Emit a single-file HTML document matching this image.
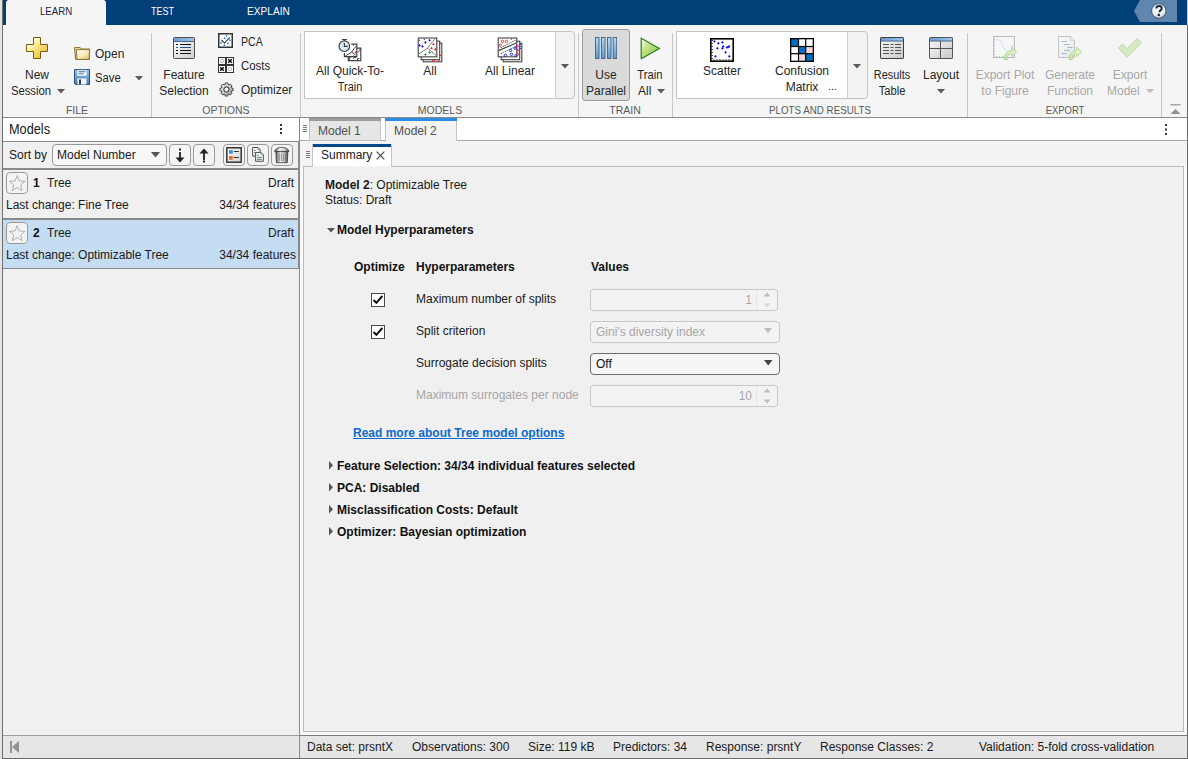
<!DOCTYPE html>
<html><head><meta charset="utf-8">
<style>
*{box-sizing:border-box;margin:0;padding:0}
html,body{width:1188px;height:759px;overflow:hidden}
body{position:relative;background:#f0f0f0;font-family:"Liberation Sans",sans-serif;font-size:12px;color:#1a1a1a}
.a{position:absolute}
.t{position:absolute;white-space:pre;line-height:1}
.rt{position:absolute;white-space:pre;line-height:1;color:#262626;text-align:center}
.lbl{position:absolute;white-space:pre;line-height:1;color:#5a5a5a;font-size:10.5px;text-align:center}
.sep{position:absolute;top:33px;width:1px;height:84px;background:#c8c8c8}
.dis{color:#a8a8a8}
.b{font-weight:bold}
</style></head><body>
<!-- left strip (other window) -->
<div class="a" style="left:0;top:0;width:2px;height:759px;background:#e4e4e4"></div>
<div class="a" style="left:2px;top:0;width:1px;height:759px;background:#6e6e6e"></div>

<!-- blue toolstrip tab bar -->
<div class="a" style="left:3px;top:0;width:1185px;height:25px;background:#003f77"></div>
<div class="a" style="left:6px;top:0;width:100px;height:25px;background:#f5f5f5;border-radius:3px 3px 0 0"></div>
<div class="t" style="left:40px;top:6px;font-size:11.5px;color:#1f1f3f;transform-origin:0 0;transform:scaleX(0.84)">LEARN</div>
<div class="t" style="left:151px;top:6px;font-size:11.5px;color:#fff;transform-origin:0 0;transform:scaleX(0.78)">TEST</div>
<div class="t" style="left:247px;top:6px;font-size:11.5px;color:#fff;transform-origin:0 0;transform:scaleX(0.88)">EXPLAIN</div>
<!-- help -->
<div class="a" style="left:1134px;top:0;width:43px;height:22px;background:#5f86ad;clip-path:polygon(0 50%,6px 0,100% 0,100% 100%,6px 100%)"></div>
<svg class="a" style="left:1150px;top:2px" width="18" height="18" viewBox="0 0 18 18">
<defs><radialGradient id="ghelp" cx="0.45" cy="0.35" r="0.7"><stop offset="0" stop-color="#ffffff"/><stop offset="0.6" stop-color="#eef0f2"/><stop offset="1" stop-color="#b4bcc4"/></radialGradient></defs>
<circle cx="8.8" cy="9" r="7.2" fill="url(#ghelp)" stroke="#2a3a55" stroke-width="0.7"/>
<path d="M6.3 6.6c0-1.7 1.2-2.6 2.7-2.6s2.7 0.9 2.7 2.4c0 1.9-2.2 2-2.2 3.8" fill="none" stroke="#1d2840" stroke-width="2"/>
<rect x="7.7" y="11.8" width="2.2" height="2.2" fill="#1d2840"/>
</svg>

<!-- ribbon -->
<div class="a" style="left:3px;top:25px;width:1184px;height:92px;background:#f5f5f5"></div>
<div class="a" style="left:3px;top:117px;width:1184px;height:1px;background:#8a8a8a"></div>

<div id="ribbon">
<!-- separators -->
<div class="sep" style="left:151px"></div>
<div class="sep" style="left:300px"></div>
<div class="sep" style="left:578px"></div>
<div class="sep" style="left:672px"></div>
<div class="sep" style="left:967px"></div>
<div class="sep" style="left:1161px"></div>
<!-- section labels -->
<div class="lbl" style="left:17px;width:120px;top:105px">FILE</div>
<div class="lbl" style="left:166px;width:120px;top:105px">OPTIONS</div>
<div class="lbl" style="left:380px;width:120px;top:105px">MODELS</div>
<div class="lbl" style="left:565px;width:120px;top:105px">TRAIN</div>
<div class="lbl" style="left:720px;width:200px;top:105px;transform:scaleX(0.93)">PLOTS AND RESULTS</div>
<div class="lbl" style="left:1005px;width:120px;top:105px;transform:scaleX(0.9)">EXPORT</div>

<!-- FILE -->
<svg class="a" style="left:26px;top:37px" width="22" height="22" viewBox="0 0 22 22">
<defs><linearGradient id="gplus" x1="0" y1="0" x2="1" y2="1"><stop offset="0" stop-color="#fffce8"/><stop offset="0.4" stop-color="#fdeb8e"/><stop offset="1" stop-color="#e3b226"/></linearGradient></defs>
<path d="M7.5 0.5h7v7h7v7h-7v7h-7v-7h-7v-7h7z" fill="url(#gplus)" stroke="#7e5c0e" stroke-width="1"/>
<path d="M8.5 1.5h5v3h-5zM1.5 8.5h6v3h-6z" fill="#fffdf0" opacity="0.6"/>
</svg>
<div class="rt" style="left:7px;width:60px;top:69px">New</div>
<div class="rt" style="left:1px;width:60px;top:85px;transform:scaleX(0.94)">Session</div>
<svg class="a" style="left:57px;top:89px" width="8" height="5"><path d="M0 0h8l-4 4.5z" fill="#5a5a5a"/></svg>

<svg class="a" style="left:74px;top:47px" width="16" height="13" viewBox="0 0 16 13">
<defs><linearGradient id="gfold" x1="0" y1="0" x2="1" y2="1"><stop offset="0" stop-color="#ffffff"/><stop offset="0.55" stop-color="#f8ecb8"/><stop offset="1" stop-color="#dcc060"/></linearGradient></defs>
<path d="M0.6 0.6h5.6l1.2 1.4h8v10.4h-13.8z" fill="#efe2b0" stroke="#8a6a25" stroke-width="1"/>
<path d="M2.4 2.6h13v9.8h-12.4z" fill="url(#gfold)" stroke="#8a6a25" stroke-width="0.9"/>
</svg>
<div class="t" style="left:95px;top:48px;color:#262626">Open</div>
<svg class="a" style="left:74px;top:69px" width="16" height="16" viewBox="0 0 16 16">
<defs><linearGradient id="gsave" x1="0" y1="0" x2="0" y2="1"><stop offset="0" stop-color="#9ccbf0"/><stop offset="1" stop-color="#3f78b8"/></linearGradient></defs>
<path d="M0.5 0.5h15v15h-14l-1-1z" fill="url(#gsave)" stroke="#254f80" stroke-width="1"/>
<rect x="3" y="1" width="10" height="6" fill="#fff" stroke="#7a9ab8" stroke-width="0.6"/>
<path d="M4.5 2.8h7M4.5 4.8h5" stroke="#3a6aa0" stroke-width="1"/>
<rect x="3.5" y="9.5" width="9" height="6" fill="#f4f4f4"/>
<rect x="5" y="10.5" width="2" height="5" fill="#1d3f66"/>
</svg>
<div class="t" style="left:95px;top:72px;color:#262626;transform-origin:0 0;transform:scaleX(0.94)">Save</div>
<svg class="a" style="left:135px;top:76px" width="8" height="5"><path d="M0 0h8l-4 4.5z" fill="#5a5a5a"/></svg>

<!-- OPTIONS -->
<svg class="a" style="left:173px;top:37px" width="22" height="22" viewBox="0 0 22 22">
<defs><linearGradient id="gwin" x1="0" y1="0" x2="1" y2="1"><stop offset="0" stop-color="#ffffff"/><stop offset="1" stop-color="#cfcfcf"/></linearGradient>
<linearGradient id="gtitle" x1="0" y1="0" x2="1" y2="0"><stop offset="0" stop-color="#6f9fd0"/><stop offset="1" stop-color="#9cc3ea"/></linearGradient></defs>
<rect x="0.5" y="0.5" width="21" height="21" rx="1" fill="url(#gwin)" stroke="#505050"/>
<rect x="1" y="1" width="20" height="3" fill="url(#gtitle)"/>
<path d="M1 4.5h20" stroke="#4a6a90" stroke-width="1"/>
<path d="M3 7.5h2M7 7.5h11M3 10.5h2M3 13.5h2M7 13.5h11M3 16.5h2M7 16.5h11" stroke="#111" stroke-width="1"/>
<path d="M3 10.5h2M7 10.5h11" stroke="#1f5aa0" stroke-width="1"/>
</svg>
<div class="rt" style="left:144px;width:80px;top:69px">Feature</div>
<div class="rt" style="left:144px;width:80px;top:85px">Selection</div>

<svg class="a" style="left:218px;top:33px" width="15" height="15" viewBox="0 0 15 15">
<rect x="0.75" y="0.75" width="13.5" height="13.5" fill="#fff" stroke="#333" stroke-width="1.5"/>
<path d="M3.3 6.8l3.2 3.2 5.2-5.6" fill="none" stroke="#333" stroke-width="1.1"/>
<g fill="#1a78d8"><path d="M8.6 1.9l1.1 1.1-1.1 1.1-1.1-1.1z"/><path d="M6.6 4.1l1.1 1.1-1.1 1.1-1.1-1.1z"/><path d="M11.8 6.1l1.1 1.1-1.1 1.1-1.1-1.1z"/><path d="M3 8.7l1.1 1.1-1.1 1.1-1.1-1.1z"/><path d="M9.9 9.2l1.1 1.1-1.1 1.1-1.1-1.1z"/><path d="M6.3 11.1l1.1 1.1-1.1 1.1-1.1-1.1z"/></g>
</svg>
<div class="t" style="left:241px;top:36px;color:#262626;transform-origin:0 0;transform:scaleX(0.88)">PCA</div>
<svg class="a" style="left:218px;top:57px" width="16" height="16" viewBox="0 0 16 16">
<rect x="0" y="0" width="16" height="16" fill="#333"/>
<rect x="1" y="1" width="6" height="6" fill="#fff"/><rect x="9" y="1" width="6" height="6" fill="#fff"/>
<rect x="1" y="9" width="6" height="6" fill="#fff"/><rect x="9" y="9" width="6" height="6" fill="#fff"/>
<circle cx="4" cy="4" r="1.7" fill="none" stroke="#a0a0a0" stroke-width="0.7"/>
<circle cx="12" cy="12" r="1.7" fill="none" stroke="#a0a0a0" stroke-width="0.7"/>
<path d="M10.2 2.2l3.6 3.6M13.8 2.2l-3.6 3.6M2.2 10.2l3.6 3.6M5.8 10.2l-3.6 3.6" stroke="#000" stroke-width="1.4"/>
</svg>
<div class="t" style="left:241px;top:60px;color:#262626;transform-origin:0 0;transform:scaleX(0.95)">Costs</div>
<svg class="a" style="left:218.5px;top:81.5px" width="15" height="15" viewBox="0 0 15 15">
<defs><linearGradient id="ggear" x1="0" y1="0" x2="1" y2="1"><stop offset="0" stop-color="#ececec"/><stop offset="1" stop-color="#a0a0a0"/></linearGradient></defs>
<path d="M6.00 2.52L6.20 0.93L8.80 0.93L9.00 2.52L9.96 2.92L11.23 1.93L13.07 3.77L12.08 5.04L12.48 6.00L14.07 6.20L14.07 8.80L12.48 9.00L12.08 9.96L13.07 11.23L11.23 13.07L9.96 12.08L9.00 12.48L8.80 14.07L6.20 14.07L6.00 12.48L5.04 12.08L3.77 13.07L1.93 11.23L2.92 9.96L2.52 9.00L0.93 8.80L0.93 6.20L2.52 6.00L2.92 5.04L1.93 3.77L3.77 1.93L5.04 2.92z" fill="url(#ggear)" stroke="#2a2a2a" stroke-width="0.8" stroke-linejoin="round"/>
<circle cx="7.5" cy="7.5" r="2.6" fill="#fafafa" stroke="#1e1e1e" stroke-width="0.95"/>
</svg>
<div class="t" style="left:241px;top:84px;color:#262626">Optimizer</div>
<!-- MODELS gallery -->
<div class="a" style="left:304px;top:31px;width:271px;height:68px;border:1px solid #c4c4c4;border-radius:0 4px 4px 0;background:#f3f3f3"></div>
<div class="a" style="left:305px;top:32px;width:251px;height:66px;background:#fff;border-right:1px solid #d0d0d0"></div>
<svg class="a" style="left:561px;top:64px" width="8" height="5"><path d="M0 0h8l-4 4.5z" fill="#5a5a5a"/></svg>

<svg class="a" style="left:334px;top:34px" width="32" height="32" viewBox="0 0 32 32">
<g fill="none" stroke="#3c3c3c" stroke-width="1.15">
<path d="M14.3 22.6v4h12.5v-12.5h-4"/>
<path d="M17.3 10.1h5.5v12.5h-12.4v-3.5"/>
<path d="M11.4 21.9l6.3-3.8 4.2-5.9M17.7 18.1l3.8 3" stroke-width="0.95"/>
<path d="M15.5 26v-2.5l2.5-1M19 24.5l2-1.5 1.5 1.5M23.5 26.5v-2h2" stroke-width="0.9"/>
<path d="M26.5 14.5l-2.5 4" stroke-width="0.8"/>
<circle cx="10.3" cy="12.2" r="5.3" fill="#dbe9f4"/>
<path d="M10.4 9v3.4h3.3"/>
<path d="M8 5.5h5M10.5 5.5v1.4"/>
</g>
<path d="M21.5 17.3l1.1 1.1-1.1 1.1-1.1-1.1z" fill="#e81010"/>
<circle cx="19.4" cy="11.4" r="0.6" fill="#6060ff"/>
<circle cx="19.4" cy="21.5" r="0.6" fill="#60b060"/>
</svg>
<div class="rt" style="left:300px;width:100px;top:65px">All Quick-To-</div>
<div class="rt" style="left:300px;width:100px;top:81px;transform:scaleX(0.91)">Train</div>

<svg class="a" style="left:417px;top:37px" width="26" height="26" viewBox="0 0 26 26">
<g fill="#fff" stroke="#444" stroke-width="1.1">
<rect x="6.3" y="6.1" width="18.5" height="18.7"/>
<rect x="4.2" y="4.2" width="18.5" height="18.5"/>
<rect x="1.2" y="1" width="18.6" height="18.8"/>
</g>
<path d="M2 16.8l8.5-5.5 7.6-9.7M10.5 11.3l8.4 6.8" fill="none" stroke="#505050" stroke-width="0.95" stroke-dasharray="1.5 0.4"/>
<g fill="#0a18ee"><path d="M2.5 2.5l0.8 0.8-0.8 0.8-0.8-0.8z"/><path d="M7.3 1.4999999999999998l0.8 0.8-0.8 0.8-0.8-0.8z"/><path d="M12.6 1.9999999999999998l1.3 1.3-1.3 1.3-1.3-1.3z"/><path d="M8.4 4.1000000000000005l1.3 1.3-1.3 1.3-1.3-1.3z"/><path d="M2.5 7.1000000000000005l1.3 1.3-1.3 1.3-1.3-1.3z"/><path d="M5.4 8.1l1.3 1.3-1.3 1.3-1.3-1.3z"/></g>
<g fill="#ee1414"><path d="M16.4 6.0l1.3 1.3-1.3 1.3-1.3-1.3z"/><path d="M14.5 10.0l1.3 1.3-1.3 1.3-1.3-1.3z"/><path d="M18.3 11.1l1.3 1.3-1.3 1.3-1.3-1.3z"/><path d="M23.4 17.400000000000002l0.9 0.9-0.9 0.9-0.9-0.9z"/><path d="M15.4 22.8l0.8 0.8-0.8 0.8-0.8-0.8z"/><path d="M17.5 22.8l0.8 0.8-0.8 0.8-0.8-0.8z"/><path d="M21.5 22.8l0.8 0.8-0.8 0.8-0.8-0.8z"/></g>
<g fill="#14801a"><path d="M12.6 14.1l1.3 1.3-1.3 1.3-1.3-1.3z"/><path d="M8.4 16.2l1.3 1.3-1.3 1.3-1.3-1.3z"/></g>
</svg>
<div class="rt" style="left:380px;width:100px;top:65px">All</div>

<svg class="a" style="left:497px;top:37px" width="26" height="26" viewBox="0 0 26 26">
<g fill="#fff" stroke="#444" stroke-width="1.1">
<rect x="6.3" y="6.1" width="18.5" height="18.7"/>
<rect x="4.2" y="4.2" width="18.5" height="18.5"/>
<rect x="1.2" y="1" width="18.6" height="18.8"/>
</g>
<path d="M1.5 13.6l18.3-7.8" stroke="#444" stroke-width="1.15"/>
<path d="M4.2 10.5l14-7.2M4.2 16.4l14-6.7" stroke="#444" stroke-width="1.1" stroke-linecap="round" stroke-dasharray="0.1 2.1"/>
<g fill="none" stroke="#ee2424" stroke-width="0.9"><circle cx="5.4" cy="4.4" r="1.2"/><circle cx="9.4" cy="4.4" r="1.2"/><circle cx="3.3" cy="8.4" r="1.2"/><circle cx="20.4" cy="9.2" r="1"/><circle cx="21.3" cy="13.2" r="1"/><circle cx="20.6" cy="17.3" r="1"/></g>
<circle cx="14.5" cy="2.3" r="0.7" fill="#ee2424"/>
<g fill="none" stroke="#1424ee" stroke-width="0.9"><circle cx="13.5" cy="13.5" r="1.2"/><circle cx="18.1" cy="11.1" r="1.2"/><circle cx="8.4" cy="18.3" r="1.2"/><circle cx="14.5" cy="17.3" r="1.2"/><circle cx="18.7" cy="18.6" r="1"/></g>
<path d="M23.4 7v6" stroke="#1424ee" stroke-width="1" stroke-dasharray="1 1"/>
</svg>
<div class="rt" style="left:460px;width:100px;top:65px">All Linear</div>

<!-- TRAIN -->
<div class="a" style="left:582px;top:29px;width:48px;height:72px;background:#dadada;border:1px solid #9c9c9c;border-radius:3px"></div>
<svg class="a" style="left:595px;top:37px" width="22" height="22" viewBox="0 0 22 22">
<defs><linearGradient id="gbar" x1="0" y1="0" x2="0" y2="1"><stop offset="0" stop-color="#b3dcf6"/><stop offset="1" stop-color="#5e9ad0"/></linearGradient></defs>
<g fill="url(#gbar)" stroke="#3f5f85" stroke-width="0.9"><rect x="0.5" y="0.5" width="3.5" height="21"/><rect x="6.5" y="0.5" width="3.5" height="21"/><rect x="12.5" y="0.5" width="3.5" height="21"/><rect x="18.2" y="0.5" width="3.5" height="21"/></g>
</svg>
<div class="rt" style="left:566px;width:80px;top:69px">Use</div>
<div class="rt" style="left:566px;width:80px;top:85px">Parallel</div>

<svg class="a" style="left:640px;top:37px" width="21" height="23" viewBox="0 0 21 23">
<defs><linearGradient id="gtri" x1="0" y1="0" x2="1" y2="1"><stop offset="0" stop-color="#ffffff"/><stop offset="0.35" stop-color="#c4e48a"/><stop offset="1" stop-color="#86c43c"/></linearGradient></defs>
<path d="M1.2 1.2l18.3 10.3-18.3 10.3z" fill="url(#gtri)" stroke="#2f7a22" stroke-width="1.2" stroke-linejoin="round"/>
</svg>
<div class="rt" style="left:610px;width:80px;top:69px;transform:scaleX(0.94)">Train</div>
<div class="t" style="left:638px;top:85px;color:#262626">All</div>
<svg class="a" style="left:657px;top:89px" width="8" height="5"><path d="M0 0h8l-4 4.5z" fill="#5a5a5a"/></svg>

<!-- PLOTS gallery -->
<div class="a" style="left:676px;top:31px;width:192px;height:68px;border:1px solid #c4c4c4;border-radius:0 4px 4px 0;background:#f3f3f3"></div>
<div class="a" style="left:677px;top:32px;width:171px;height:66px;background:#fff;border-right:1px solid #d0d0d0"></div>
<svg class="a" style="left:853px;top:64px" width="8" height="5"><path d="M0 0h8l-4 4.5z" fill="#5a5a5a"/></svg>

<svg class="a" style="left:710px;top:38px" width="24" height="24" viewBox="0 0 24 24">
<rect x="0.8" y="0.8" width="22.4" height="22.4" fill="#fff" stroke="#000" stroke-width="1.6"/>
<path d="M1.5 2.5h1.3M1.5 5.5h1.3M1.5 8.5h1.3M1.5 11.5h1.3M1.5 14.5h1.3M1.5 17.5h1.3M1.5 20.5h1.3M4 22.5v-1.3M7 22.5v-1.3M10 22.5v-1.3M13 22.5v-1.3M16 22.5v-1.3M19 22.5v-1.3M22 22.5v-1.3" stroke="#000" stroke-width="0.9"/>
<g fill="#0b14f0"><path d="M4.34 2.03l1.35 1.35-1.35 1.35-1.35-1.35z"/><path d="M8.35 4.02l1.35 1.35-1.35 1.35-1.35-1.35z"/><path d="M12.35 3.09l1.35 1.35-1.35 1.35-1.35-1.35z"/><path d="M7.42 9.00l1.35 1.35-1.35 1.35-1.35-1.35z"/><path d="M12.35 9.00l1.35 1.35-1.35 1.35-1.35-1.35z"/><path d="M13.20 7.10l1.35 1.35-1.35 1.35-1.35-1.35z"/><path d="M15.52 13.00l1.35 1.35-1.35 1.35-1.35-1.35z"/><path d="M5.39 17.01l1.35 1.35-1.35 1.35-1.35-1.35z"/><path d="M19.32 17.01l1.35 1.35-1.35 1.35-1.35-1.35z"/><path d="M19.11 7.10l1.35 1.35-1.35 1.35-1.35-1.35z"/><path d="M18.05 7.73l1.35 1.35-1.35 1.35-1.35-1.35z"/><path d="M17.00 8.15l1.35 1.35-1.35 1.35-1.35-1.35z"/></g>
</svg>
<div class="rt" style="left:672px;width:100px;top:65px">Scatter</div>

<svg class="a" style="left:790px;top:38px" width="24" height="24" viewBox="0 0 24 24">
<rect x="0" y="0" width="24" height="24" fill="#000"/>
<rect x="1.3" y="1.3" width="6.6" height="6.6" fill="#0070c4"/><rect x="9.1" y="1.3" width="6" height="6.6" fill="#fff"/><rect x="16.3" y="1.3" width="6.4" height="6.6" fill="#fff"/>
<rect x="1.3" y="9.1" width="6.6" height="6" fill="#fff"/><rect x="9.1" y="9.1" width="6" height="6" fill="#0070c4"/><rect x="16.3" y="9.1" width="6.4" height="6" fill="#f9d3db"/>
<rect x="1.3" y="16.3" width="6.6" height="6.4" fill="#fff"/><rect x="9.1" y="16.3" width="6" height="6.4" fill="#f9d3db"/><rect x="16.3" y="16.3" width="6.4" height="6.4" fill="#0070c4"/>
</svg>
<div class="rt" style="left:752px;width:100px;top:65px">Confusion</div>
<div class="rt" style="left:752px;width:100px;top:81px">Matrix</div>
<div class="t" style="left:828px;top:81px;color:#262626;font-size:11px">...</div>

<!-- Results table / Layout -->
<svg class="a" style="left:880px;top:37px" width="24" height="22" viewBox="0 0 24 22">
<defs><linearGradient id="gbody" x1="0" y1="0" x2="1" y2="1"><stop offset="0" stop-color="#fafafa"/><stop offset="1" stop-color="#c8c8c8"/></linearGradient>
<linearGradient id="gtb" x1="0" y1="0" x2="1" y2="0"><stop offset="0" stop-color="#6b9bd0"/><stop offset="1" stop-color="#9ccbf0"/></linearGradient></defs>
<rect x="0.5" y="0.5" width="23" height="21" rx="0.6" fill="url(#gbody)" stroke="#3d3d3d"/>
<rect x="1" y="1" width="22" height="2.8" fill="url(#gtb)"/><path d="M0.5 4h23" stroke="#41618a"/>
<path d="M3 7.5h6M10.5 7.5h3M15 7.5h6M3 10.5h6M10.5 10.5h3M15 10.5h6M3 13.5h6M10.5 13.5h3M15 13.5h6M3 16.5h6M10.5 16.5h3M15 16.5h6" stroke="#555" stroke-width="1"/>
</svg>
<div class="rt" style="left:852px;width:80px;top:69px;transform:scaleX(0.91)">Results</div>
<div class="rt" style="left:852px;width:80px;top:85px;transform:scaleX(0.93)">Table</div>
<svg class="a" style="left:929px;top:37px" width="24" height="22" viewBox="0 0 24 22">
<rect x="0.5" y="0.5" width="23" height="21" rx="0.6" fill="url(#gbody)" stroke="#555"/>
<rect x="1" y="1" width="22" height="2.8" fill="url(#gtb)"/><path d="M0.5 4h23" stroke="#41618a"/>
<path d="M11.5 4v17.5M0.5 11.5h23" stroke="#555" stroke-width="1"/>
</svg>
<div class="rt" style="left:901px;width:80px;top:69px">Layout</div>
<svg class="a" style="left:937px;top:89px" width="8" height="5"><path d="M0 0h8l-4 4.5z" fill="#5a5a5a"/></svg>

<!-- EXPORT (disabled) -->
<svg class="a" style="left:990px;top:34px" width="30" height="28" viewBox="0 0 30 28">
<defs><linearGradient id="garr" x1="0" y1="1" x2="1" y2="0"><stop offset="0" stop-color="#b8dca0"/><stop offset="0.6" stop-color="#e4f2d0"/><stop offset="1" stop-color="#cfe8b4"/></linearGradient></defs>
<rect x="3.6" y="2.5" width="20.8" height="21" fill="#f6f6f6" stroke="#b9b9b9" stroke-width="1"/>
<path d="M4 5.5h1M4 8.5h1M4 11.5h1M4 14.5h1M4 17.5h1M4 20.3h1M6.3 23v-1M9.4 23v-1M12.5 23v-1" stroke="#b9b9b9" stroke-width="0.9"/>
<path d="M4.3 9.5C5.5 5.5 7 5 8.3 5.3 11 6 13 13 15.5 16.6 18 19 22 18 23.8 9" fill="none" stroke="#c6daee" stroke-width="0.9"/>
<path d="M14.2 25.6C14.2 20.5 16.3 17.4 21.6 16.6V13.2L26.6 17.8 21.6 22.6V19.6C18.6 19.9 17.2 22 17.2 25.6z" fill="url(#garr)" stroke="#a6d28e" stroke-width="0.8" stroke-linejoin="round"/>
</svg>
<div class="rt dis" style="left:955px;width:100px;top:69px">Export Plot</div>
<div class="rt dis" style="left:955px;width:100px;top:85px">to Figure</div>
<svg class="a" style="left:1055px;top:34px" width="30" height="28" viewBox="0 0 30 28">
<defs><linearGradient id="gdoc" x1="0" y1="0" x2="1" y2="1"><stop offset="0" stop-color="#fafafa"/><stop offset="1" stop-color="#e2e8ef"/></linearGradient></defs>
<path d="M3.6 2.5h12l3.9 3.9v17.1h-15.9z" fill="url(#gdoc)" stroke="#c2c2c2" stroke-width="1"/>
<path d="M15.6 2.5v4h3.9" fill="#f4f4f4" stroke="#c8c8c8" stroke-width="0.8"/>
<path d="M6.1 7.5h5.7M9 10.5h5.8M12.2 13.5h5.5M9 16.4h5.8M6.1 19.4h5.7" stroke="#b4b4b4" stroke-width="1"/>
<path d="M14.2 25.6C14.2 20.5 16.3 17.4 21.6 16.6V13.2L26.6 17.8 21.6 22.6V19.6C18.6 19.9 17.2 22 17.2 25.6z" fill="url(#garr)" stroke="#a6d28e" stroke-width="0.8" stroke-linejoin="round"/>
</svg>
<div class="rt dis" style="left:1030px;width:80px;top:69px">Generate</div>
<div class="rt dis" style="left:1030px;width:80px;top:85px">Function</div>
<svg class="a" style="left:1118px;top:38px" width="24" height="20" viewBox="0 0 24 20">
<path d="M0.5 10l4-4 4.5 4.5 10.5-10 4 4-14.5 15z" fill="#d4e9c4" stroke="#b6d6a2" stroke-width="0.8"/>
</svg>
<div class="rt dis" style="left:1090px;width:80px;top:69px">Export</div>
<div class="t dis" style="left:1107px;top:85px">Model</div>
<svg class="a" style="left:1146px;top:89px" width="8" height="5"><path d="M0 0h8l-4 4.5z" fill="#c0c0c0"/></svg>

<!-- collapse ribbon -->
<svg class="a" style="left:1170px;top:104px" width="11" height="11" viewBox="0 0 11 11">
<path d="M0.5 0.8h10" stroke="#909090" stroke-width="1.2"/><path d="M0.5 10l5-5 5 5z" fill="#909090"/>
</svg>
</div>

<!-- left panel -->
<div class="a" style="left:3px;top:118px;width:296px;height:23px;background:#fff"></div>
<div class="t" style="left:9px;top:122px;font-size:14px;color:#1a1a1a;transform-origin:0 0;transform:scaleX(0.91)">Models</div>
<div class="a" style="left:280px;top:124px;width:2px;height:2px;background:#333;box-shadow:0 4px 0 #333,0 8px 0 #333"></div>
<div class="a" style="left:3px;top:141px;width:296px;height:1px;background:#8a8a8a"></div>
<div class="a" style="left:3px;top:142px;width:296px;height:26px;background:#f0f0f0"></div>
<div class="a" style="left:3px;top:168px;width:296px;height:2px;background:#8a8a8a"></div>
<div class="a" style="left:3px;top:218px;width:296px;height:2px;background:#8a8a8a"></div>
<div class="a" style="left:3px;top:220px;width:296px;height:48px;background:#c5ddf3"></div>
<div class="a" style="left:3px;top:268px;width:296px;height:1px;background:#8a8a8a"></div>
<div class="a" style="left:3px;top:735px;width:296px;height:1px;background:#a0a0a0"></div>
<div class="a" style="left:3px;top:736px;width:296px;height:22px;background:#e6e6e6"></div>
<div class="a" style="left:299px;top:118px;width:1px;height:641px;background:#8a8a8a"></div>
<div class="a" style="left:298px;top:141px;width:1px;height:128px;background:#8a8a8a"></div>

<div id="leftpanel">
<div class="t" style="left:9px;top:149px;color:#1a1a1a">Sort by</div>
<div class="a" style="left:52px;top:144px;width:115px;height:22px;border:1px solid #9a9a9a;border-radius:4px;background:#f7f7f7"></div>
<div class="t" style="left:57px;top:149px;color:#1a1a1a">Model Number</div>
<svg class="a" style="left:151px;top:152px" width="9" height="6"><path d="M0 0h9l-4.5 5.5z" fill="#555"/></svg>
<div class="a" style="left:169px;top:144px;width:22px;height:22px;border:1px solid #9a9a9a;border-radius:4px;background:#f3f3f3"></div>
<svg class="a" style="left:175px;top:147px" width="10" height="17" viewBox="0 0 10 17">
<rect x="4" y="1.5" width="2" height="2" fill="#222"/><rect x="4.1" y="5" width="1.8" height="7" fill="#222"/><path d="M0.5 10.5h9l-4.5 5z" fill="#222"/>
</svg>
<div class="a" style="left:193px;top:144px;width:22px;height:22px;border:1px solid #9a9a9a;border-radius:4px;background:#f3f3f3"></div>
<svg class="a" style="left:199px;top:147px" width="10" height="17" viewBox="0 0 10 17">
<path d="M0.5 6.5h9l-4.5-5z" fill="#222"/><rect x="4.1" y="6" width="1.8" height="7" fill="#222"/><rect x="4" y="13.5" width="2" height="2" fill="#222"/>
</svg>
<div class="a" style="left:223px;top:144px;width:22px;height:22px;border:1px solid #9a9a9a;border-radius:4px;background:#f3f3f3"></div>
<svg class="a" style="left:226px;top:147px" width="16" height="16" viewBox="0 0 16 16">
<defs><linearGradient id="glist" x1="0" y1="0" x2="1" y2="1"><stop offset="0" stop-color="#fff"/><stop offset="1" stop-color="#d0d0d0"/></linearGradient></defs>
<rect x="0.8" y="0.8" width="14.4" height="14.4" fill="url(#glist)" stroke="#333" stroke-width="1.5"/>
<rect x="3" y="3" width="3.8" height="3.8" fill="#3a96e0"/><rect x="3" y="9" width="3.8" height="3.8" fill="#e8732a"/>
<path d="M7.8 4.5h5M7.8 10.5h5" stroke="#333" stroke-width="1"/>
</svg>
<div class="a" style="left:247px;top:144px;width:22px;height:22px;border:1px solid #9a9a9a;border-radius:4px;background:#f3f3f3"></div>
<svg class="a" style="left:246px;top:143px" width="24" height="24" viewBox="0 0 24 24">
<defs><linearGradient id="gcp" x1="0" y1="0" x2="0" y2="1"><stop offset="0" stop-color="#ffffff"/><stop offset="1" stop-color="#dcecf2"/></linearGradient></defs>
<path d="M6.6 4.5h5.4l2.2 2.2v6.5h-7.6z" fill="url(#gcp)" stroke="#4a4a4a" stroke-width="0.95"/>
<path d="M12 4.5v2.2h2.2" fill="none" stroke="#6a6a6a" stroke-width="0.6"/>
<path d="M8 7.4h1.8M8 9.5h3" stroke="#555" stroke-width="0.7"/>
<path d="M9.6 9.6h5.6l2.2 2.2v6.5h-7.8z" fill="url(#gcp)" stroke="#4a4a4a" stroke-width="0.95"/>
<path d="M15.2 9.6v2.2h2.2" fill="none" stroke="#6a6a6a" stroke-width="0.6"/>
<path d="M11 12.3h1.8M11 14.4h4.8M11 16.4h4.8" stroke="#555" stroke-width="0.8"/>
</svg>
<div class="a" style="left:271px;top:144px;width:22px;height:22px;border:1px solid #9a9a9a;border-radius:4px;background:#f3f3f3"></div>
<svg class="a" style="left:270px;top:143px" width="24" height="24" viewBox="0 0 24 24">
<defs><linearGradient id="gtr" x1="0" y1="0" x2="1" y2="0"><stop offset="0" stop-color="#505050"/><stop offset="0.35" stop-color="#f2f2f2"/><stop offset="0.7" stop-color="#c8c8c8"/><stop offset="1" stop-color="#4a4a4a"/></linearGradient></defs>
<path d="M4.6 8.6c0.2-2.6 3.5-4.2 7.2-4.2s7 1.6 7.2 4.2z" fill="url(#gtr)" stroke="#3a3a3a" stroke-width="0.8"/>
<path d="M5.9 8.7h11.9l-0.5 11h-10.9z" fill="url(#gtr)" stroke="#3a3a3a" stroke-width="0.8"/>
<path d="M9.3 10.5v7.5M11.4 10.5v7.5M13.6 10.5v7.5M15.8 10.5v7.5" stroke="#6a6a6a" stroke-width="0.7"/>
</svg>

<!-- rows -->
<div class="a" style="left:6px;top:172px;width:22px;height:22px;border:1px solid #9a9a9a;border-radius:4px;background:#f3f3f3"></div>
<svg class="a" style="left:6px;top:172px" width="22" height="22" viewBox="0 0 22 22"><path d="M11.20 3.60L13.32 8.99L19.09 9.34L14.62 13.01L16.08 18.61L11.20 15.50L6.32 18.61L7.78 13.01L3.31 9.34L9.08 8.99z" fill="none" stroke="#a8a8a8" stroke-width="0.9" stroke-linejoin="round"/></svg>
<div class="t b" style="left:33px;top:177px;color:#111">1</div>
<div class="t" style="left:47px;top:177px;color:#1a1a1a">Tree</div>
<div class="t" style="left:238px;width:56px;text-align:right;top:177px;color:#1a1a1a">Draft</div>
<div class="t" style="left:6px;top:199px;color:#1a1a1a">Last change: Fine Tree</div>
<div class="t" style="left:196px;width:100px;text-align:right;top:199px;color:#1a1a1a">34/34 features</div>

<div class="a" style="left:6px;top:222px;width:22px;height:22px;border:1px solid #9a9a9a;border-radius:4px;background:#f3f3f3"></div>
<svg class="a" style="left:6px;top:222px" width="22" height="22" viewBox="0 0 22 22"><path d="M11.20 3.60L13.32 8.99L19.09 9.34L14.62 13.01L16.08 18.61L11.20 15.50L6.32 18.61L7.78 13.01L3.31 9.34L9.08 8.99z" fill="none" stroke="#a8a8a8" stroke-width="0.9" stroke-linejoin="round"/></svg>
<div class="t b" style="left:33px;top:227px;color:#111">2</div>
<div class="t" style="left:47px;top:227px;color:#1a1a1a">Tree</div>
<div class="t" style="left:238px;width:56px;text-align:right;top:227px;color:#1a1a1a">Draft</div>
<div class="t" style="left:6px;top:249px;color:#1a1a1a">Last change: Optimizable Tree</div>
<div class="t" style="left:196px;width:100px;text-align:right;top:249px;color:#1a1a1a">34/34 features</div>

<svg class="a" style="left:10px;top:741px" width="11" height="12" viewBox="0 0 11 12"><rect x="0" y="0" width="2" height="12" fill="#939393"/><path d="M9 0v12l-7-6z" fill="#939393"/></svg>
</div>

<!-- right panel -->
<div class="a" style="left:300px;top:118px;width:887px;height:22px;background:#fff"></div>
<div class="a" style="left:300px;top:140px;width:887px;height:1px;background:#a8a8a8"></div>
<div class="a" style="left:300px;top:141px;width:887px;height:594px;background:#f3f3f3"></div>

<div id="rightpanel">
<!-- grip -->
<svg class="a" style="left:303px;top:125px" width="5" height="7"><path d="M0 0.5h4M0 2.5h4M0 4.5h4M0 6.5h4" stroke="#777" stroke-width="1"/></svg>
<!-- Model 1 tab -->
<div class="a" style="left:309px;top:118px;width:72px;height:23px;background:#e6e6e6;border:1px solid #c4c4c4;border-top:none"></div>
<div class="a" style="left:309px;top:118px;width:72px;height:3px;background:#9c9c9c"></div>
<div class="t" style="left:318px;top:125px;color:#505050">Model 1</div>
<!-- Model 2 tab -->
<div class="a" style="left:385px;top:118px;width:72px;height:23px;background:#f3f3f3;border-left:1px solid #c4c4c4;border-right:1px solid #c4c4c4"></div>
<div class="a" style="left:385px;top:118px;width:72px;height:3px;background:#2a8de4"></div>
<div class="t" style="left:394px;top:125px;color:#505050">Model 2</div>
<svg class="a" style="left:1165px;top:124px" width="3" height="11"><rect x="0" y="0" width="2" height="2" fill="#333"/><rect x="0" y="4.5" width="2" height="2" fill="#333"/><rect x="0" y="9" width="2" height="2" fill="#333"/></svg>

<!-- Summary tab -->
<svg class="a" style="left:306px;top:151px" width="5" height="8"><path d="M0 0.5h4M0 2.5h4M0 4.5h4M0 6.5h4" stroke="#777" stroke-width="1"/></svg>
<div class="a" style="left:312px;top:144px;width:80px;height:23px;background:#fff;border-left:1px solid #c4c4c4;border-right:1px solid #c4c4c4"></div>
<div class="a" style="left:313px;top:144px;width:78px;height:3px;background:#004a8c"></div>
<div class="t" style="left:321px;top:149px;color:#1a1a1a">Summary</div>
<svg class="a" style="left:376px;top:151px" width="9" height="9"><path d="M0.7 0.7l7.6 7.6M8.3 0.7l-7.6 7.6" stroke="#444" stroke-width="1.1"/></svg>

<!-- summary panel -->
<div class="a" style="left:300px;top:166px;width:887px;height:569px;background:#f9f9f9"></div>
<div class="a" style="left:303px;top:166px;width:881px;height:566px;background:#f0f0f0;border:1px solid #bcbcbc"></div>
<div class="a" style="left:313px;top:166px;width:78px;height:1px;background:#f6f6f6"></div>

<div class="t" style="left:325px;top:179px;color:#1a1a1a"><b>Model 2</b>: Optimizable Tree</div>
<div class="t" style="left:325px;top:194px;color:#1a1a1a">Status: Draft</div>
<svg class="a" style="left:327px;top:228px" width="8" height="5"><path d="M0 0h8l-4 4.5z" fill="#555"/></svg>
<div class="t b" style="left:337px;top:224px;color:#111">Model Hyperparameters</div>

<div class="t b" style="left:354px;top:261px;color:#111">Optimize</div>
<div class="t b" style="left:416px;top:261px;color:#111">Hyperparameters</div>
<div class="t b" style="left:591px;top:261px;color:#111">Values</div>

<!-- checkboxes -->
<div class="a" style="left:371px;top:293px;width:14px;height:14px;border:1px solid #4a4a4a;background:#fff"></div>
<svg class="a" style="left:371px;top:293px" width="14" height="14"><path d="M2.5 7l2.9 2.8 5.9-6.8" fill="none" stroke="#111" stroke-width="2"/></svg>
<div class="a" style="left:371px;top:325px;width:14px;height:14px;border:1px solid #4a4a4a;background:#fff"></div>
<svg class="a" style="left:371px;top:325px" width="14" height="14"><path d="M2.5 7l2.9 2.8 5.9-6.8" fill="none" stroke="#111" stroke-width="2"/></svg>

<div class="t" style="left:416px;top:293px;color:#1a1a1a">Maximum number of splits</div>
<div class="t" style="left:416px;top:325px;color:#1a1a1a">Split criterion</div>
<div class="t" style="left:416px;top:357px;color:#1a1a1a">Surrogate decision splits</div>
<div class="t" style="left:416px;top:389px;color:#a6a6a6">Maximum surrogates per node</div>

<!-- spinner 1 -->
<div class="a" style="left:590px;top:289px;width:188px;height:22px;border:1px solid #c8c8c8;border-radius:3px;background:#f3f3f3"></div>
<div class="a" style="left:756px;top:290px;width:1px;height:20px;background:#e6e6e6"></div>
<div class="t" style="left:700px;width:52px;text-align:right;top:294px;color:#a6a6a6">1</div>
<svg class="a" style="left:763px;top:292px" width="8" height="16"><path d="M0.5 4.5h7l-3.5-4z" fill="#bdbdbd"/><path d="M0.5 11.5h7l-3.5 4z" fill="#d6d6d6"/></svg>
<!-- dropdown disabled -->
<div class="a" style="left:590px;top:321px;width:190px;height:22px;border:1px solid #c8c8c8;border-radius:4px;background:#f3f3f3"></div>
<div class="t" style="left:596px;top:326px;color:#a6a6a6">Gini's diversity index</div>
<svg class="a" style="left:764px;top:328px" width="9" height="6"><path d="M0 0h8l-4 5.5z" fill="#bdbdbd"/></svg>
<!-- dropdown Off -->
<div class="a" style="left:590px;top:353px;width:190px;height:22px;border:1px solid #6e6e6e;border-radius:4px;background:#f5f5f5"></div>
<div class="t" style="left:596px;top:358px;color:#111">Off</div>
<svg class="a" style="left:764px;top:360px" width="9" height="6"><path d="M0 0h8.5l-4.25 5.5z" fill="#444"/></svg>
<!-- spinner 2 -->
<div class="a" style="left:590px;top:385px;width:188px;height:22px;border:1px solid #c8c8c8;border-radius:3px;background:#f3f3f3"></div>
<div class="a" style="left:756px;top:386px;width:1px;height:20px;background:#e6e6e6"></div>
<div class="t" style="left:700px;width:52px;text-align:right;top:390px;color:#a6a6a6">10</div>
<svg class="a" style="left:763px;top:388px" width="8" height="16"><path d="M0.5 4.5h7l-3.5-4z" fill="#bdbdbd"/><path d="M0.5 11.5h7l-3.5 4z" fill="#bdbdbd"/></svg>

<div class="t b" style="left:353px;top:427px;color:#0e6ad0;text-decoration:underline">Read more about Tree model options</div>

<svg class="a" style="left:329px;top:461px" width="5" height="9"><path d="M0 0v8.5l4-4.25z" fill="#555"/></svg>
<div class="t b" style="left:337px;top:460px;color:#111">Feature Selection: 34/34 individual features selected</div>
<svg class="a" style="left:329px;top:483px" width="5" height="9"><path d="M0 0v8.5l4-4.25z" fill="#555"/></svg>
<div class="t b" style="left:337px;top:482px;color:#111">PCA: Disabled</div>
<svg class="a" style="left:329px;top:505px" width="5" height="9"><path d="M0 0v8.5l4-4.25z" fill="#555"/></svg>
<div class="t b" style="left:337px;top:504px;color:#111">Misclassification Costs: Default</div>
<svg class="a" style="left:329px;top:527px" width="5" height="9"><path d="M0 0v8.5l4-4.25z" fill="#555"/></svg>
<div class="t b" style="left:337px;top:526px;color:#111">Optimizer: Bayesian optimization</div>
</div>

<!-- status bar -->
<div class="a" style="left:300px;top:735px;width:887px;height:1px;background:#7c7c7c"></div>
<div class="a" style="left:300px;top:736px;width:887px;height:22px;background:#e6e6e6"></div>
<div class="a" style="left:3px;top:758px;width:1185px;height:1px;background:#6a6a6a"></div>
<div class="a" style="left:1187px;top:25px;width:1px;height:734px;background:#6a6a6a"></div>
<div class="a" style="left:1187px;top:0;width:1px;height:25px;background:#c4c4c4"></div>

<div id="status">
<div class="t" style="left:307px;top:741px;color:#1a1a1a">Data set: prsntX</div>
<div class="t" style="left:412px;top:741px;color:#1a1a1a">Observations: 300</div>
<div class="t" style="left:528px;top:741px;color:#1a1a1a">Size: 119 kB</div>
<div class="t" style="left:613px;top:741px;color:#1a1a1a">Predictors: 34</div>
<div class="t" style="left:706px;top:741px;color:#1a1a1a">Response: prsntY</div>
<div class="t" style="left:820px;top:741px;color:#1a1a1a">Response Classes: 2</div>
<div class="t" style="left:979px;top:741px;color:#1a1a1a">Validation: 5-fold cross-validation</div>
</div>
</body></html>
